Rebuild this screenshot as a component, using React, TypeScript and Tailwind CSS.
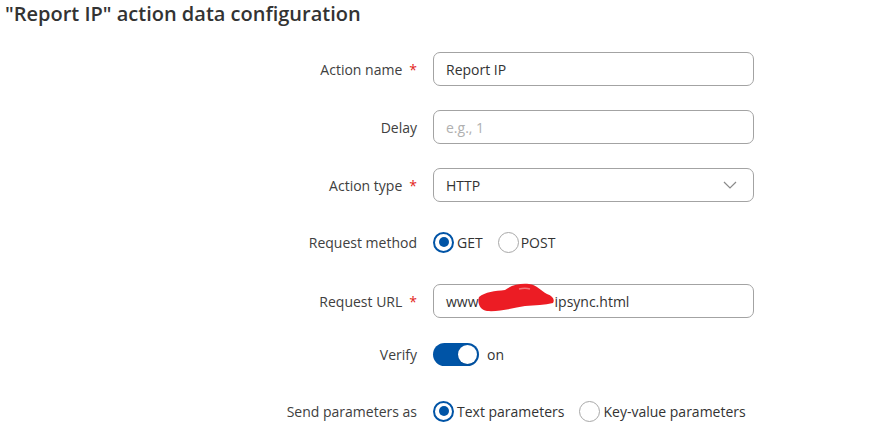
import React from "react";

const font = { fontFamily: '"Open Sans", "Noto Sans", sans-serif' };

function Label({ text, req }: { text: string; req?: boolean }) {
  return (
    <div className="w-[417px] shrink-0 flex justify-end items-center text-[14px] text-[#404040]">
      <span>{text}</span>
      {req && <span className="ml-[7px] text-[#e2231a] text-[14px]">*</span>}
    </div>
  );
}

function Radio({ checked }: { checked?: boolean }) {
  return checked ? (
    <span className="shrink-0 w-[21px] h-[21px] rounded-full border-[2.5px] border-[#0054a6] flex items-center justify-center bg-white">
      <span className="block w-[10px] h-[10px] rounded-full bg-[#0054a6]" />
    </span>
  ) : (
    <span className="shrink-0 block w-[21px] h-[21px] rounded-full border border-[#a8a8a8] bg-white" />
  );
}

function Chevron() {
  return (
    <svg width="14" height="8" viewBox="0 0 14 8" fill="none">
      <path d="M1 1l6 6 6-6" stroke="#8a8a8a" strokeWidth="1.2" />
    </svg>
  );
}

export default function App() {
  return (
    <div className="w-[884px] h-[441px] bg-white overflow-hidden" style={font}>
      <div className="h-7 pl-[5px] flex items-center text-[20px] font-semibold text-[#333333]">
        "Report IP" action data configuration
      </div>

      <div className="flex flex-col">
        <div className="flex items-center h-[34px] mt-[24px]">
          <Label text="Action name" req />
          <div className="ml-4 w-[321px] h-[34px] border border-[#a3a3a3] rounded-[7px] flex items-center px-[12px] text-[14px] text-[#333]">
            Report IP
          </div>
        </div>

        <div className="flex items-center h-[34px] mt-[24px]">
          <Label text="Delay" />
          <div className="ml-4 w-[321px] h-[34px] border border-[#a3a3a3] rounded-[7px] flex items-center px-[12px] text-[14px] text-[#b0b0b0]">
            e.g., 1
          </div>
        </div>

        <div className="flex items-center h-[34px] mt-[24px]">
          <Label text="Action type" req />
          <div className="ml-4 w-[321px] h-[34px] border border-[#a3a3a3] rounded-[7px] flex items-center justify-between pl-[12px] pr-[16px] text-[14px] text-[#333]">
            <span>HTTP</span>
            <Chevron />
          </div>
        </div>

        <div className="flex items-center h-[34px] mt-[23px]">
          <Label text="Request method" />
          <div className="ml-4 flex items-center text-[14px] text-[#333]">
            <Radio checked />
            <span className="ml-[3px]">GET</span>
            <span className="ml-[15px]"><Radio /></span>
            <span className="ml-[2px]">POST</span>
          </div>
        </div>

        <div className="flex items-center h-[34px] mt-[25px]">
          <Label text="Request URL" req />
          <div className="relative ml-4 w-[321px] h-[34px] border border-[#a3a3a3] rounded-[7px] flex items-center px-[12px] text-[14px] text-[#333]">
            <span>www</span>
            <span className="inline-block w-[76px]" />
            <span>ipsync.html</span>
            <svg className="absolute left-[43px] top-[-2px]" width="78" height="29" viewBox="0 0 78 29">
              <path
                d="M2 14 C8 9, 18 8, 28 7 C34 2, 44 0, 52 1 C60 2, 64 8, 70 11 C76 13, 78 17, 76 20 C68 22, 58 22, 48 23 C36 25, 22 29, 10 28 C3 27, 0 20, 2 14 Z"
                fill="#ec1c24"
              />
              <path d="M42 6 C46 5, 50 5, 53 6" stroke="#f2777b" strokeWidth="1.5" fill="none" />
            </svg>
          </div>
        </div>

        <div className="flex items-center h-[34px] mt-[19px]">
          <Label text="Verify" />
          <div className="ml-4 flex items-center text-[14px] text-[#333]">
            <span className="w-[46px] h-[23px] rounded-full bg-[#0054a6] flex items-center justify-end pr-[2px]">
              <span className="block w-[19px] h-[19px] rounded-full bg-white shadow-sm" />
            </span>
            <span className="ml-[8px]">on</span>
          </div>
        </div>

        <div className="flex items-center h-[34px] mt-[23px]">
          <Label text="Send parameters as" />
          <div className="ml-4 flex items-center text-[14px] text-[#333]">
            <Radio checked />
            <span className="ml-[3px]">Text parameters</span>
            <span className="ml-[15px]"><Radio /></span>
            <span className="ml-[3px]">Key-value parameters</span>
          </div>
        </div>
      </div>
    </div>
  );
}
